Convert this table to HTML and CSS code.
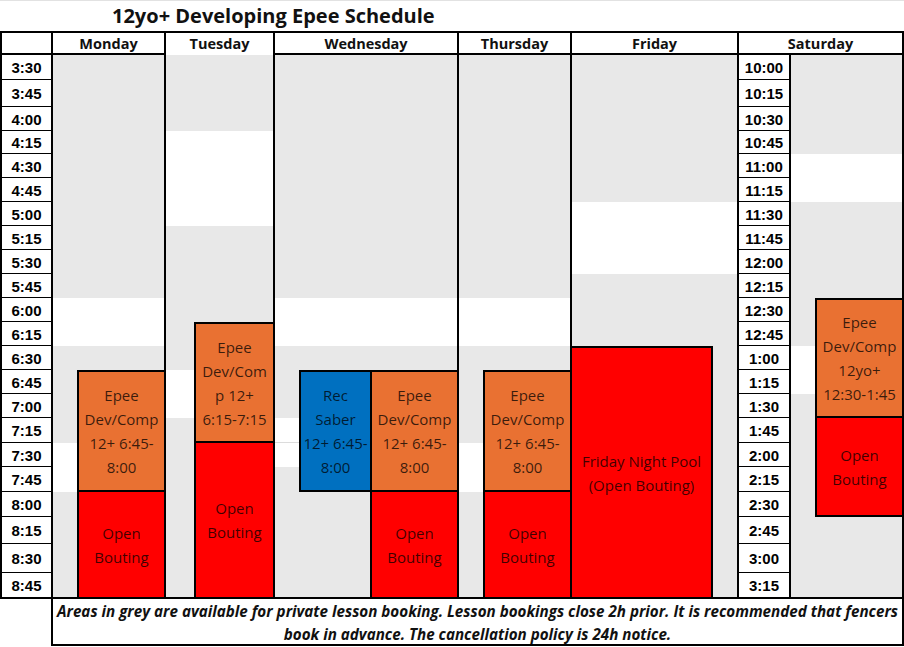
FILE: index.html
```html
<!DOCTYPE html>
<html lang="en">
<head>
<meta charset="utf-8">
<title>12yo+ Developing Epee Schedule</title>
<link rel="stylesheet" href="styles.css">
</head>
<body>
<div class="title">12yo+ Developing Epee Schedule</div>
<div class="sheet">
  <div class="w w-mon1"></div>
  <div class="w w-mon2"></div>
  <div class="w w-tue1"></div>
  <div class="w w-tue2"></div>
  <div class="w w-wed1"></div>
  <div class="w w-wed2a"></div>
  <div class="w w-wed2b"></div>
  <div class="w w-thu1"></div>
  <div class="w w-thu2"></div>
  <div class="w w-fri"></div>
  <div class="w w-sat1"></div>
  <div class="w w-sat2"></div>

  <div class="hl hl-top"></div>
  <div class="hl hl-head1"></div>
  <div class="hl hl-head2"></div>
  <div class="hl hl-bot"></div>
  <div class="vl vl1"></div>
  <div class="vl vl3"></div>
  <div class="vl vl6"></div>
  <div class="vl vl9"></div>
  <div class="vl vl13"></div>
  <div class="vl vl16"></div>
  <div class="vl vl19"></div>
  <div class="vl vl21"></div>
  <div class="vl vl24"></div>

  <div class="hd h-time"></div>
  <div class="hd h-mon">Monday</div>
  <div class="hd h-tue">Tuesday</div>
  <div class="hd h-wed">Wednesday</div>
  <div class="hd h-thu">Thursday</div>
  <div class="hd h-fri">Friday</div>
  <div class="hd h-sat">Saturday</div>

  <div class="tc r0">3:30</div>
  <div class="tc r1">3:45</div>
  <div class="tc r2">4:00</div>
  <div class="tc r3">4:15</div>
  <div class="tc r4">4:30</div>
  <div class="tc r5">4:45</div>
  <div class="tc r6">5:00</div>
  <div class="tc r7">5:15</div>
  <div class="tc r8">5:30</div>
  <div class="tc r9">5:45</div>
  <div class="tc r10">6:00</div>
  <div class="tc r11">6:15</div>
  <div class="tc r12">6:30</div>
  <div class="tc r13">6:45</div>
  <div class="tc r14">7:00</div>
  <div class="tc r15">7:15</div>
  <div class="tc r16">7:30</div>
  <div class="tc r17">7:45</div>
  <div class="tc r18">8:00</div>
  <div class="tc r19">8:15</div>
  <div class="tc r20">8:30</div>
  <div class="tc r21 last">8:45</div>

  <div class="tc sat r0">10:00</div>
  <div class="tc sat r1">10:15</div>
  <div class="tc sat r2">10:30</div>
  <div class="tc sat r3">10:45</div>
  <div class="tc sat r4">11:00</div>
  <div class="tc sat r5">11:15</div>
  <div class="tc sat r6">11:30</div>
  <div class="tc sat r7">11:45</div>
  <div class="tc sat r8">12:00</div>
  <div class="tc sat r9">12:15</div>
  <div class="tc sat r10">12:30</div>
  <div class="tc sat r11">12:45</div>
  <div class="tc sat r12">1:00</div>
  <div class="tc sat r13">1:15</div>
  <div class="tc sat r14">1:30</div>
  <div class="tc sat r15">1:45</div>
  <div class="tc sat r16">2:00</div>
  <div class="tc sat r17">2:15</div>
  <div class="tc sat r18">2:30</div>
  <div class="tc sat r19">2:45</div>
  <div class="tc sat r20">3:00</div>
  <div class="tc sat r21 last">3:15</div>

  <div class="ev orange e-mon-o">Epee<br>Dev/Comp<br>12+ 6:45-<br>8:00</div>
  <div class="ev red e-mon-r">Open<br>Bouting</div>
  <div class="ev orange e-tue-o">Epee<br>Dev/Com<br>p 12+<br>6:15-7:15</div>
  <div class="ev red e-tue-r">Open<br>Bouting</div>
  <div class="ev blue e-wed-b">Rec<br>Saber<br>12+ 6:45-<br>8:00</div>
  <div class="ev orange e-wed-o">Epee<br>Dev/Comp<br>12+ 6:45-<br>8:00</div>
  <div class="ev red e-wed-r">Open<br>Bouting</div>
  <div class="ev orange e-thu-o">Epee<br>Dev/Comp<br>12+ 6:45-<br>8:00</div>
  <div class="ev red e-thu-r">Open<br>Bouting</div>
  <div class="ev red top e-fri-r">Friday Night Pool<br>(Open Bouting)</div>
  <div class="ev orange e-sat-o">Epee<br>Dev/Comp<br>12yo+<br>12:30-1:45</div>
  <div class="ev red boxed e-sat-r">Open<br>Bouting</div>
</div>
<div class="foot">
  <div class="foot-gap"></div>
  <div class="foot-box">
    <span>Areas in grey are available for private lesson booking. Lesson bookings close 2h prior. It is recommended that fencers</span>
    <span>book in advance. The cancellation policy is 24h notice.</span>
  </div>
</div>
</body>
</html>
```
FILE: styles.css
```css
* { box-sizing: border-box; }
html, body { margin: 0; padding: 0; background: #fff; }
body {
  width: 904px;
  height: 647px;
  overflow: hidden;
  font-family: "Open Sans", "Liberation Sans", sans-serif;
  color: #000;
}

.title {
  height: 31px;
  border-top: 1px solid #e2e2e2;
  padding-left: 112px;
  font-size: 20px;
  font-weight: 700;
  line-height: 30px;
  white-space: nowrap;
  color: #111;
}

.sheet {
  display: grid;
  grid-template-columns: 2px 49px 2px 24px 87px 2px 28px 79px 2px 24px 71px 87px 2px 24px 87px 2px 141px 24px 2px 50px 2px 24px 87px 2px;
  grid-template-rows: 2px 20px 2px 25px 27px 24px 23px repeat(11, 24px) 25px 24px 25px 25px 27px 29px 24px 2px;
  background: #e8e8e8;
}

/* free (white) bands */
.w { background: #fff; }
.w-mon1 { grid-column: 4 / 6; grid-row: 14 / 16; }
.w-mon2 { grid-column: 4 / 5; grid-row: 20 / 22; }
.w-tue1 { grid-column: 7 / 9; grid-row: 7 / 11; }
.w-tue2 { grid-column: 7 / 8; grid-row: 17 / 19; }
.w-wed1 { grid-column: 10 / 13; grid-row: 14 / 16; }
.w-wed2a { grid-column: 10 / 11; grid-row: 19 / 20; border-bottom: 1px solid #dcdcdc; }
.w-wed2b { grid-column: 10 / 11; grid-row: 20 / 21; }
.w-thu1 { grid-column: 14 / 16; grid-row: 14 / 16; }
.w-thu2 { grid-column: 14 / 15; grid-row: 20 / 22; }
.w-fri { grid-column: 17 / 19; grid-row: 10 / 13; }
.w-sat1 { grid-column: 22 / 24; grid-row: 8 / 10; }
.w-sat2 { grid-column: 22 / 23; grid-row: 16 / 18; }

/* rules */
.hl, .vl { background: #000; }
.hl-top { grid-column: 1 / -1; grid-row: 1 / 2; }
.hl-head1 { grid-column: 1 / 7; grid-row: 3 / 4; }
.hl-head2 { grid-column: 9 / -1; grid-row: 3 / 4; }
.hl-bot { grid-column: 1 / -1; grid-row: 26 / 27; }
.vl { grid-row: 1 / -1; }
.vl1 { grid-column: 1; }
.vl3 { grid-column: 3; }
.vl6 { grid-column: 6; }
.vl9 { grid-column: 9; }
.vl13 { grid-column: 13; }
.vl16 { grid-column: 16; }
.vl19 { grid-column: 19; }
.vl21 { grid-column: 21; grid-row: 3 / -1; }
.vl24 { grid-column: 24; }

/* header */
.hd {
  grid-row: 2 / 3;
  background: #fff;
  display: flex;
  align-items: center;
  justify-content: center;
  font-size: 14.5px;
  font-weight: 700;
  color: #111;
  white-space: nowrap;
}
.h-time { grid-column: 2 / 3; }
.h-mon { grid-column: 4 / 6; }
.h-tue { grid-column: 7 / 9; grid-row: 2 / 4; padding-bottom: 2px; }
.h-wed { grid-column: 10 / 13; }
.h-thu { grid-column: 14 / 16; }
.h-fri { grid-column: 17 / 19; }
.h-sat { grid-column: 20 / 24; }

/* time cells */
.tc {
  grid-column: 2 / 3;
  background: #fff;
  border-bottom: 1px solid #000;
  display: flex;
  align-items: center;
  justify-content: center;
  padding-top: 1px;
  font-family: "Liberation Sans", Arial, sans-serif;
  font-size: 15px;
  font-weight: 700;
  white-space: nowrap;
}
.tc.sat { grid-column: 20 / 21; }
.tc.last { border-bottom: 0; }
.r0 { grid-row: 4; } .r1 { grid-row: 5; } .r2 { grid-row: 6; } .r3 { grid-row: 7; }
.r4 { grid-row: 8; } .r5 { grid-row: 9; } .r6 { grid-row: 10; } .r7 { grid-row: 11; }
.r8 { grid-row: 12; } .r9 { grid-row: 13; } .r10 { grid-row: 14; } .r11 { grid-row: 15; }
.r12 { grid-row: 16; } .r13 { grid-row: 17; } .r14 { grid-row: 18; } .r15 { grid-row: 19; }
.r16 { grid-row: 20; } .r17 { grid-row: 21; } .r18 { grid-row: 22; } .r19 { grid-row: 23; }
.r20 { grid-row: 24; } .r21 { grid-row: 25; }

/* events */
.ev {
  border: 2px solid #000;
  display: flex;
  align-items: center;
  justify-content: center;
  text-align: center;
  font-size: 15px;
  line-height: 24px;
  color: rgba(0, 0, 0, 0.75);
  white-space: nowrap;
}
.orange { background: #e97132; }
.red { background: #ff0000; border-top: 0; border-bottom: 0; }
.red.top { border-top: 2px solid #000; }
.red.boxed { border-bottom: 2px solid #000; }
.blue { background: #0070c0; border-right: 0; }

.e-mon-o { grid-column: 5 / 7; grid-row: 17 / 22; }
.e-mon-r { grid-column: 5 / 7; grid-row: 22 / 26; }
.e-tue-o { grid-column: 8 / 10; grid-row: 15 / 20; }
.e-tue-r { grid-column: 8 / 10; grid-row: 20 / 26; }
.e-wed-b { grid-column: 11 / 12; grid-row: 17 / 22; }
.e-wed-o { grid-column: 12 / 14; grid-row: 17 / 22; }
.e-wed-r { grid-column: 12 / 14; grid-row: 22 / 26; }
.e-thu-o { grid-column: 15 / 17; grid-row: 17 / 22; }
.e-thu-r { grid-column: 15 / 17; grid-row: 22 / 26; }
.e-fri-r { grid-column: 16 / 18; grid-row: 16 / 26; }
.e-sat-o { grid-column: 23 / 25; grid-row: 14 / 19; }
.e-sat-r { grid-column: 23 / 25; grid-row: 19 / 23; }

/* footer note */
.foot { display: flex; height: 48px; }
.foot-gap { width: 51px; flex: none; }
.foot-box {
  flex: 1;
  height: 47px;
  border: 2px solid #000;
  border-top: 0;
  display: flex;
  flex-direction: column;
  align-items: center;
  justify-content: center;
  padding-top: 2px;
  font-size: 15.2px;
  font-weight: 700;
  font-style: italic;
  line-height: 23px;
  letter-spacing: 0;
  white-space: nowrap;
  color: #111;
}
```
